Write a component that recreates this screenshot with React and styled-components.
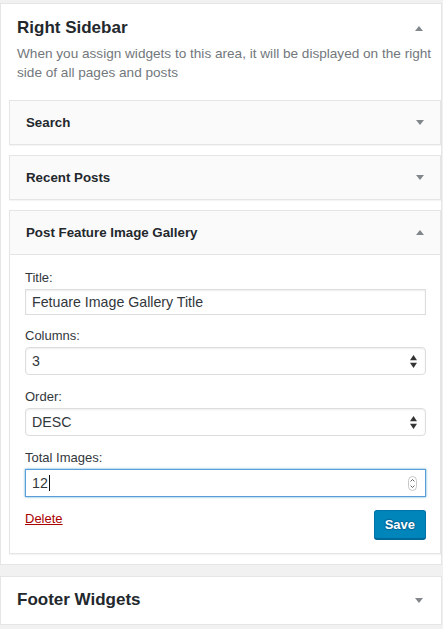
import React from "react";
import styled, { createGlobalStyle } from "styled-components";

const Global = createGlobalStyle`
  html, body { margin: 0; padding: 0; background: #f1f1f1; }
  body {
    font-family: "Liberation Sans", Arial, Helvetica, sans-serif;
    color: #32373c;
    -webkit-font-smoothing: antialiased;
  }
  * { box-sizing: border-box; }
`;

const Page = styled.div`
  width: 443px;
  padding-top: 3px;
`;

const Panel = styled.section`
  width: 442px;
  background: #fff;
  border: 1px solid #e5e5e5;
  padding: ${(p) => (p.$open ? "12px 0 10px 0" : "11px 0 12px 0")};
  margin-bottom: ${(p) => (p.$gapBelow ? "11px" : "0")};
`;

const PanelHead = styled.div`
  display: flex;
  align-items: center;
  justify-content: space-between;
  padding: 0 18px 0 16px;
`;

const PanelTitle = styled.h2`
  margin: 0;
  font-size: 17px;
  line-height: 24px;
  font-weight: 700;
  color: #23282d;
`;

const Description = styled.p`
  margin: 4px 0 18px 0;
  padding: 0 3px 0 16px;
  font-size: 13.6px;
  line-height: 19px;
  color: #72777c;
`;

const WidgetList = styled.div`
  display: flex;
  flex-direction: column;
  gap: 10px;
  margin-left: 8px;
`;

const Widget = styled.div`
  background: #fff;
  border: 1px solid #e5e5e5;
  box-shadow: 0 1px 1px rgba(0, 0, 0, 0.04);
`;

const WidgetTop = styled.div`
  height: ${(p) => (p.$open ? "44px" : "43px")};
  display: flex;
  align-items: center;
  justify-content: space-between;
  padding: 0 16px;
  background: #fafafa;
  border-bottom: ${(p) => (p.$open ? "1px solid #e5e5e5" : "none")};
`;

const WidgetTitle = styled.h3`
  margin: 0;
  font-size: 13.3px;
  line-height: 18px;
  font-weight: 700;
  color: #23282d;
`;

const WidgetBody = styled.form`
  padding: 14px 14px 14px 15px;
  display: flex;
  flex-direction: column;
`;

const FieldGroup = styled.div`
  display: flex;
  flex-direction: column;
  margin-bottom: ${(p) => p.$gap}px;
`;

const Label = styled.label`
  font-size: 13px;
  line-height: 18px;
  color: #32373c;
  margin-bottom: 2px;
`;

const Control = styled.div`
  height: ${(p) => p.$h}px;
  display: flex;
  align-items: center;
  justify-content: space-between;
  padding: 0 8px 0 6px;
  background: #fff;
  border: 1px solid ${(p) => (p.$focus ? "#5b9dd9" : "#ddd")};
  border-radius: ${(p) => (p.$select ? "4px" : "0")};
  box-shadow: ${(p) =>
    p.$focus
      ? "0 0 2px rgba(30, 140, 190, 0.8)"
      : "inset 0 1px 2px rgba(0, 0, 0, 0.07)"};
  font-size: 14.2px;
  color: #32373c;
`;

const Value = styled.span`
  display: inline-flex;
  align-items: center;
  line-height: 18px;
`;

const Caret = styled.span`
  display: inline-block;
  width: 1px;
  height: 16px;
  background: #111;
  margin-left: 1px;
`;

const Actions = styled.div`
  display: flex;
  justify-content: space-between;
  align-items: flex-start;
`;

const DeleteLink = styled.a`
  font-size: 13px;
  line-height: 18px;
  color: #a00;
  text-decoration: underline;
  cursor: pointer;
`;

const SaveButton = styled.button`
  height: 29px;
  padding: 0 10px;
  font-family: inherit;
  font-size: 13px;
  font-weight: 700;
  color: #fff;
  background: #0085ba;
  border: 1px solid #0073aa;
  border-bottom-color: #006799;
  border-radius: 3px;
  box-shadow: 0 1px 0 #006799;
  text-shadow: 0 -1px 1px #006799, 1px 0 1px #006799, 0 1px 1px #006799,
    -1px 0 1px #006799;
`;

const Toggle = ({ up }) => (
  <svg width="8" height="5" viewBox="0 0 8 5" aria-hidden="true">
    <polygon points={up ? "0,5 4,0 8,5" : "0,0 8,0 4,5"} fill="#82878c" />
  </svg>
);

const SelectArrows = () => (
  <svg width="7" height="13" viewBox="0 0 7 13" aria-hidden="true">
    <polygon points="0,5.3 3.5,0 7,5.3" fill="#333" />
    <polygon points="0,7.7 7,7.7 3.5,13" fill="#333" />
  </svg>
);

const Spinner = () => (
  <svg width="9" height="15" viewBox="0 0 9 15" aria-hidden="true">
    <rect x="0.5" y="0.5" width="8" height="14" rx="4" fill="#fff" stroke="#c8c8c8" />
    <polyline points="2.6,5.4 4.5,3.5 6.4,5.4" fill="none" stroke="#555" strokeWidth="0.9" />
    <polyline points="2.6,9.6 4.5,11.5 6.4,9.6" fill="none" stroke="#555" strokeWidth="0.9" />
  </svg>
);

const ClosedWidget = ({ title }) => (
  <Widget>
    <WidgetTop>
      <WidgetTitle>{title}</WidgetTitle>
      <Toggle />
    </WidgetTop>
  </Widget>
);

export default function App() {
  return (
    <Page>
      <Global />
      <Panel $open $gapBelow>
        <PanelHead>
          <PanelTitle>Right Sidebar</PanelTitle>
          <Toggle up />
        </PanelHead>
        <Description>
          When you assign widgets to this area, it will be displayed on the right
          side of all pages and posts
        </Description>
        <WidgetList>
          <ClosedWidget title="Search" />
          <ClosedWidget title="Recent Posts" />
          <Widget>
            <WidgetTop $open>
              <WidgetTitle>Post Feature Image Gallery</WidgetTitle>
              <Toggle up />
            </WidgetTop>
            <WidgetBody onSubmit={(e) => e.preventDefault()}>
              <FieldGroup $gap={12}>
                <Label>Title:</Label>
                <Control $h={26}>
                  <Value>Fetuare Image Gallery Title</Value>
                </Control>
              </FieldGroup>
              <FieldGroup $gap={13}>
                <Label>Columns:</Label>
                <Control $h={28} $select>
                  <Value>3</Value>
                  <SelectArrows />
                </Control>
              </FieldGroup>
              <FieldGroup $gap={13}>
                <Label>Order:</Label>
                <Control $h={28} $select>
                  <Value>DESC</Value>
                  <SelectArrows />
                </Control>
              </FieldGroup>
              <FieldGroup $gap={13}>
                <Label>Total Images:</Label>
                <Control $h={28} $focus>
                  <Value>
                    12
                    <Caret />
                  </Value>
                  <Spinner />
                </Control>
              </FieldGroup>
              <Actions>
                <DeleteLink>Delete</DeleteLink>
                <SaveButton type="submit">Save</SaveButton>
              </Actions>
            </WidgetBody>
          </Widget>
        </WidgetList>
      </Panel>
      <Panel>
        <PanelHead>
          <PanelTitle>Footer Widgets</PanelTitle>
          <Toggle />
        </PanelHead>
      </Panel>
    </Page>
  );
}
